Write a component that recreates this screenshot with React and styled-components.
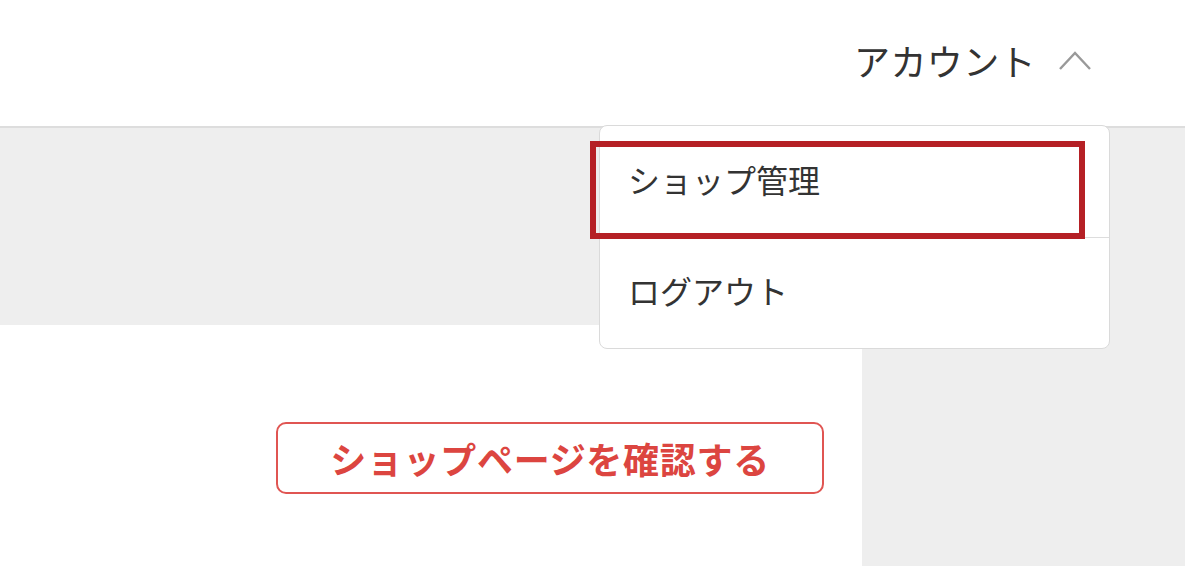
import React, { useState } from 'react'
import styled, { createGlobalStyle } from 'styled-components'

const GlobalStyle = createGlobalStyle`
    html, body {
        margin: 0;
        padding: 0;
        background: #eeeeee;
        font-family: "Noto Sans CJK JP", "Noto Sans", sans-serif;
        color: #333333;
    }
`;

const Page = styled.div`
    position: relative;
    width: 1185px;
    height: 566px;
    overflow: hidden;
    background: #eeeeee;
    display: flex;
    flex-direction: column;
`;

const Header = styled.header`
    height: 128px;
    flex-shrink: 0;
    background: #ffffff;
    border-bottom: 2px solid #dddddd;
    box-sizing: border-box;
    display: flex;
    justify-content: flex-end;
    align-items: center;
    padding: 0 93px 6px 0;
`;

const AccountToggle = styled.button`
    display: flex;
    align-items: center;
    gap: 22px;
    background: none;
    border: none;
    padding: 0;
    font-family: inherit;
    font-size: 36px;
    letter-spacing: 0.4px;
    color: #333333;
    cursor: pointer;
    svg{
        color: #999999;
    }
`;

const Band = styled.div`
    height: 197px;
    flex-shrink: 0;
    background: #eeeeee;
`;

const Body = styled.div`
    display: flex;
    flex: 1;
`;

const Panel = styled.section`
    width: 862px;
    background: #ffffff;
    box-sizing: border-box;
    display: flex;
    justify-content: flex-end;
    align-items: flex-start;
    padding: 97px 38px 0 0;
`;

const OutlineButton = styled.button`
    width: 548px;
    height: 72px;
    border: 2px solid #e05552;
    border-radius: 10px;
    background: #ffffff;
    color: #dc4540;
    font-family: inherit;
    font-size: 36px;
    font-weight: 700;
    letter-spacing: 0.7px;
    cursor: pointer;
`;

const Menu = styled.ul`
    position: absolute;
    top: 125px;
    left: 599px;
    width: 511px;
    margin: 0;
    padding: 0;
    list-style: none;
    background: #ffffff;
    border: 1px solid #dadada;
    border-radius: 8px;
    box-sizing: border-box;
    overflow: hidden;
`;

const MenuItem = styled.li`
    height: 111px;
    display: flex;
    align-items: center;
    padding: 0 0 6px 28px;
    box-sizing: border-box;
    font-size: 32px;
    color: #333333;
    & + &{
        border-top: 1px solid #dddddd;
    }
`;

const Highlight = styled.div`
    position: absolute;
    top: 141px;
    left: 590px;
    width: 495px;
    height: 98px;
    border: 6px solid #b52025;
    box-sizing: border-box;
    pointer-events: none;
`;

function ChevronUp() {
    return (
        <svg width="34" height="22" viewBox="0 0 34 22" fill="none">
            <path d="M2 20 L17 4 L32 20" stroke="currentColor" strokeWidth="2.4" />
        </svg>
    )
}

function App() {
    const [open, setOpen] = useState(true)

    return (
        <Page>
            <GlobalStyle />
            <Header>
                <AccountToggle onClick={() => setOpen(!open)}>
                    アカウント
                    <ChevronUp />
                </AccountToggle>
            </Header>
            <Band />
            <Body>
                <Panel>
                    <OutlineButton>ショップページを確認する</OutlineButton>
                </Panel>
            </Body>
            {open && (
                <Menu>
                    <MenuItem>ショップ管理</MenuItem>
                    <MenuItem>ログアウト</MenuItem>
                </Menu>
            )}
            {open && <Highlight />}
        </Page>
    )
}

export default App
